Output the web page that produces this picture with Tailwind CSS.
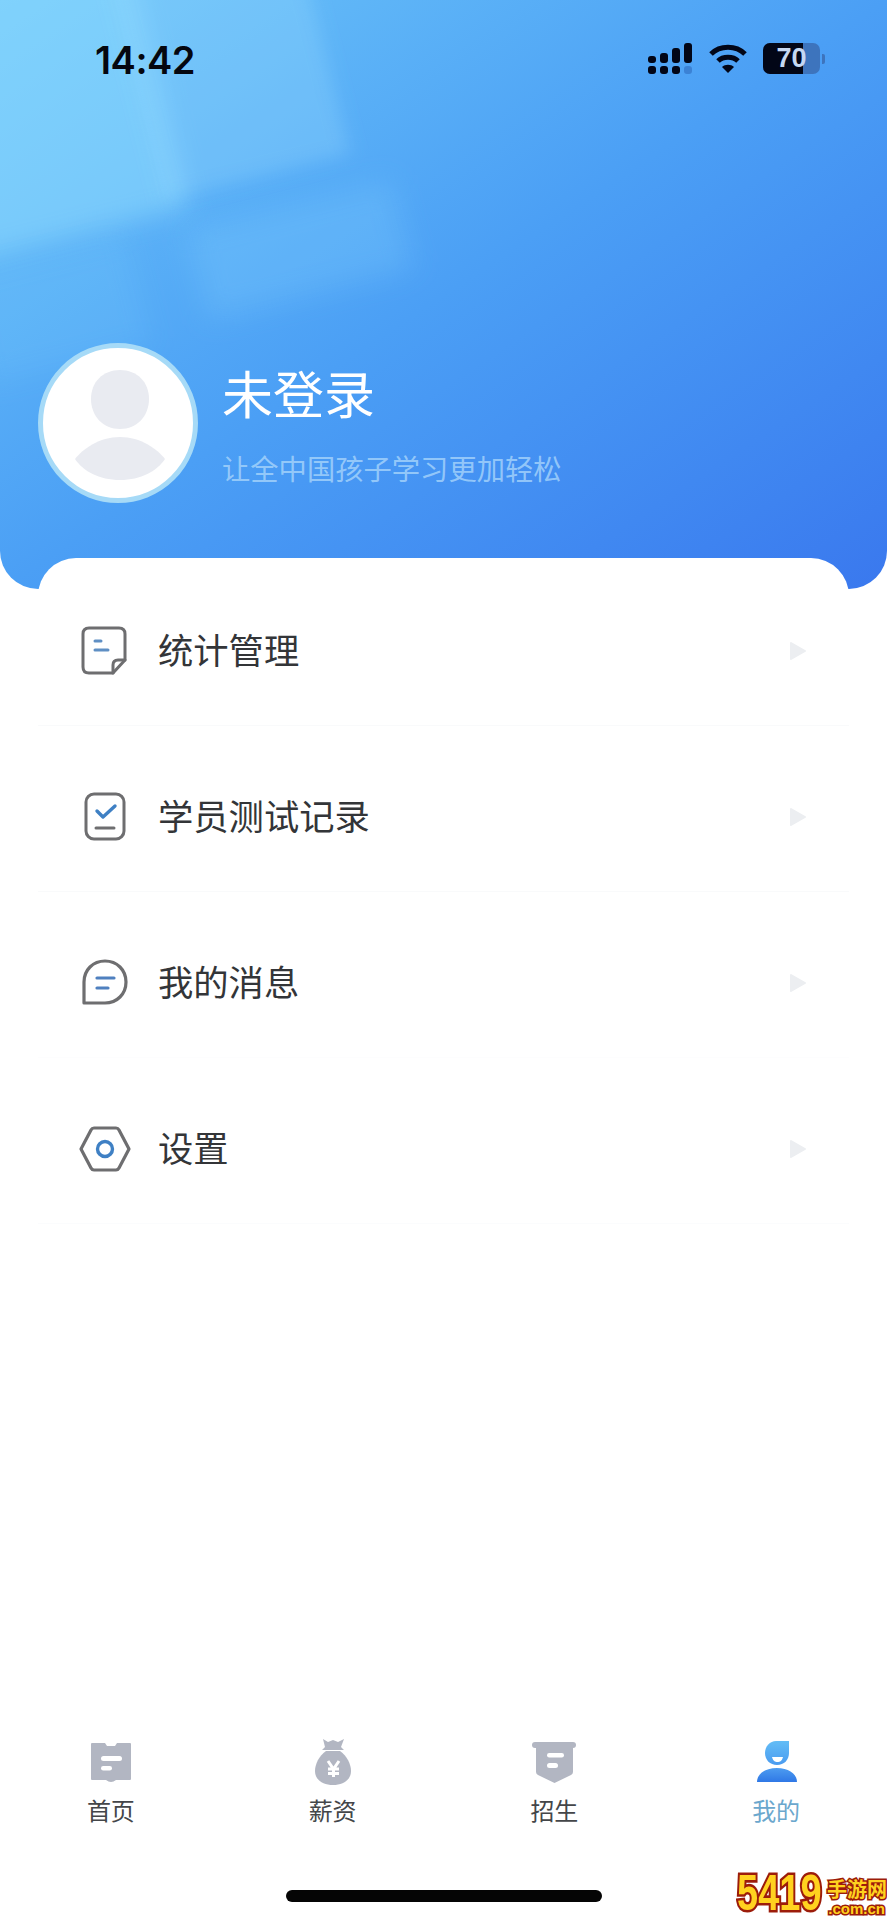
<!DOCTYPE html>
<html lang="zh">
<head>
<meta charset="utf-8">
<script src="https://cdn.jsdelivr.net/npm/@tailwindcss/browser@4"></script>
<title>我的</title>
</head>
<body class="bg-white">
<div class="relative w-[887px] h-[1920px] overflow-hidden bg-white flex flex-col font-['Noto_Sans_CJK_SC','Noto_Sans',sans-serif]">

  <!-- Header -->
  <header class="relative h-[589px] shrink-0 overflow-hidden rounded-b-[38px] bg-gradient-to-br from-[#6cc4f8] via-[#4b9ff5] to-[#3a78ee]">
    <!-- soft light panes -->
    <div class="absolute left-[-80px] top-[-60px] w-[235px] h-[300px] rotate-[-14deg] bg-[#93e0ff]/50 blur-[13px]"></div>
    <div class="absolute left-[135px] top-[-50px] w-[190px] h-[230px] rotate-[-14deg] bg-[#9fe0ff]/28 blur-[9px]"></div>
    <div class="absolute left-[195px] top-[205px] w-[210px] h-[90px] rotate-[-14deg] bg-[#8fdcff]/20 blur-[14px]"></div>
    <div class="absolute left-[-30px] top-[255px] w-[170px] h-[110px] rotate-[-14deg] bg-[#8fdcff]/12 blur-[14px]"></div>

    <div class="relative flex flex-col h-full">
      <!-- Status bar -->
      <div class="h-[120px] shrink-0 flex items-start justify-between pl-[95px] pr-[62px] pt-[36px]">
        <span class="font-['Inter',sans-serif] font-semibold text-[38px] leading-[48px] tracking-[-0.5px] text-[#05070f]">14:42</span>
        <div class="flex items-start gap-[16px] pt-[7px]">
          <svg width="46" height="32" viewBox="0 0 46 32" fill="#020617">
            <rect x="1" y="13" width="8" height="7" rx="3"/><rect x="1" y="23" width="8" height="8" rx="3"/>
            <rect x="13" y="10" width="8" height="10" rx="3"/><rect x="13" y="23" width="8" height="8" rx="3"/>
            <rect x="25" y="5" width="8" height="15" rx="3"/><rect x="25" y="23" width="8" height="8" rx="3"/>
            <rect x="37" y="0" width="8" height="20" rx="3"/><rect x="37" y="23" width="8" height="8" rx="3" fill="#2f6cbf" opacity=".6"/>
          </svg>
          <svg width="38" height="32" viewBox="0 0 38 32" fill="none" stroke="#020617" stroke-width="5">
            <path d="M2 11 C11 2 27 2 36 11"/>
            <path d="M9 18 C14 13 24 13 29 18"/>
            <path d="M19 30 L13 24 C16 21 22 21 25 24 Z" fill="#020617" stroke="none"/>
          </svg>
          <div class="flex items-center gap-[2px]">
            <div class="relative w-[57px] h-[31px] rounded-[7px] bg-[#3d74bd] overflow-hidden flex items-center justify-center">
              <div class="absolute inset-y-0 left-0 w-[40px] bg-[#020617]"></div>
              <span class="relative font-['Liberation_Sans',sans-serif] font-bold text-[27px] leading-none text-[#c5d8f2]">70</span>
            </div>
            <div class="w-[3px] h-[10px] rounded-r-[2px] bg-[#3d74bd]"></div>
          </div>
        </div>
      </div>

      <!-- Profile -->
      <div class="flex items-center pl-[38px] pt-[223px]">
        <div class="w-[160px] h-[160px] shrink-0 rounded-full bg-white border-[5px] border-[#a6daf7] flex items-center justify-center">
          <svg width="110" height="116" viewBox="0 0 110 116" fill="#e9ebf1" class="mt-[4px]">
            <path d="M57 3 C74 3 86 15 86 32 C86 49 74 62 57 62 C40 62 28 49 28 32 C28 15 40 3 57 3 Z"/>
            <path d="M57 70 C78 70 94 82 102 92 C94 104 78 113 57 113 C36 113 20 104 12 92 C20 82 36 70 57 70 Z"/>
          </svg>
        </div>
        <div class="ml-[24px] flex flex-col -mt-[1px]">
          <span class="text-[51px] leading-[66px] text-white">未登录</span>
          <span class="mt-[25px] text-[28.3px] leading-[36px] text-[#a8d5fb]/80">让全中国孩子学习更加轻松</span>
        </div>
      </div>
    </div>
  </header>

  <!-- Menu card -->
  <main class="relative mx-[38px] -mt-[31px] flex-1 bg-white rounded-t-[38px] pt-[2px]">
    <div class="flex items-start h-[166px] pt-[61px] pl-[37px] pr-[42px] border-b border-[#f9fafb]">
      <svg width="60" height="60" viewBox="0 0 60 60" fill="none" stroke-linecap="round" stroke-linejoin="round" class="shrink-0">
        <path d="M14 7 H44 Q50 7 50 13 V39 L38 52 H14 Q8 52 8 46 V13 Q8 7 14 7 Z" stroke="#6e6e70" stroke-width="3"/>
        <path d="M50 39 H43 Q38 39 38 44 V52" stroke="#6e6e70" stroke-width="3"/>
        <path d="M20 20 H26 M20 29 H33" stroke="#5f8fc4" stroke-width="3"/>
      </svg>
      <span class="ml-[23px] text-[35.3px] leading-[56px] text-[#333538]">统计管理</span>
      <svg width="18" height="22" viewBox="0 0 18 22" class="ml-auto mt-[19px] shrink-0"><path d="M2 3 L16 11 L2 19 Z" fill="#eceef1" stroke="#eceef1" stroke-width="2" stroke-linejoin="round"/></svg>
    </div>
    <div class="flex items-start h-[166px] pt-[61px] pl-[37px] pr-[42px] border-b border-[#f9fafb]">
      <svg width="60" height="60" viewBox="0 0 60 60" fill="none" stroke-linecap="round" stroke-linejoin="round" class="shrink-0">
        <rect x="11" y="7" width="38" height="45" rx="8" stroke="#6e6e70" stroke-width="3"/>
        <path d="M22 24 L28 30 L40 19" stroke="#3f80c4" stroke-width="3.4"/>
        <path d="M21 41 H39" stroke="#6e6e70" stroke-width="3"/>
      </svg>
      <span class="ml-[23px] text-[35.3px] leading-[56px] text-[#333538]">学员测试记录</span>
      <svg width="18" height="22" viewBox="0 0 18 22" class="ml-auto mt-[19px] shrink-0"><path d="M2 3 L16 11 L2 19 Z" fill="#eceef1" stroke="#eceef1" stroke-width="2" stroke-linejoin="round"/></svg>
    </div>
    <div class="flex items-start h-[166px] pt-[61px] pl-[37px] pr-[42px] border-b border-[#fdfdfe]">
      <svg width="60" height="60" viewBox="0 0 60 60" fill="none" stroke-linecap="round" stroke-linejoin="round" class="shrink-0">
        <path d="M9 50 V29 C9 17 18 8 30 8 C42 8 51 17 51 29 C51 41 42 50 30 50 Z" stroke="#6e6e70" stroke-width="3.2"/>
        <path d="M22 25 H39 M22 35 H33" stroke="#4f80bf" stroke-width="3.2"/>
      </svg>
      <span class="ml-[23px] text-[35.3px] leading-[56px] text-[#333538]">我的消息</span>
      <svg width="18" height="22" viewBox="0 0 18 22" class="ml-auto mt-[19px] shrink-0"><path d="M2 3 L16 11 L2 19 Z" fill="#eceef1" stroke="#eceef1" stroke-width="2" stroke-linejoin="round"/></svg>
    </div>
    <div class="flex items-start h-[166px] pt-[61px] pl-[37px] pr-[42px] border-b border-[#fbfcfd]">
      <svg width="60" height="60" viewBox="0 0 60 60" fill="none" stroke-linecap="round" stroke-linejoin="round" class="shrink-0">
        <path d="M6 30 L16 11 Q17 9 19 9 H41 Q43 9 44 11 L54 30 L44 49 Q43 51 41 51 H19 Q17 51 16 49 Z" stroke="#6e6e70" stroke-width="3.2"/>
        <circle cx="30" cy="30" r="7.5" stroke="#3f80c4" stroke-width="3.4"/>
      </svg>
      <span class="ml-[23px] text-[35.3px] leading-[56px] text-[#333538]">设置</span>
      <svg width="18" height="22" viewBox="0 0 18 22" class="ml-auto mt-[19px] shrink-0"><path d="M2 3 L16 11 L2 19 Z" fill="#eceef1" stroke="#eceef1" stroke-width="2" stroke-linejoin="round"/></svg>
    </div>
  </main>

  <!-- Tab bar -->
  <nav class="h-[184px] shrink-0 grid grid-cols-4 pt-[2px]">
    <div class="flex flex-col items-center">
      <svg width="50" height="50" viewBox="0 0 50 50" fill="#b2b6c2">
        <path d="M6 5 H19 L21 8 H29 L31 5 H44 Q45 5 45 6 V41 Q45 42 44 42 H30 Q25 46 20 42 H6 Q5 42 5 41 V6 Q5 5 6 5 Z"/>
        <rect x="15" y="18" width="21" height="5" rx="2.5" fill="#fff"/><rect x="15" y="28" width="11" height="4.5" rx="2.2" fill="#fff"/>
      </svg>
      <span class="mt-[5px] text-[24px] leading-[34px] text-[#444649]">首页</span>
    </div>
    <div class="flex flex-col items-center">
      <svg width="50" height="50" viewBox="0 0 50 50" fill="#b2b6c2">
        <path d="M15 1 L20 4 L25 2 L30 4 L36 1 L33 9 L36 12 H14 L17 9 Z"/>
        <path d="M18 13 H32 C39 18 43 26 43 33 C43 42 35 47 25 47 C15 47 7 42 7 33 C7 26 11 18 18 13 Z"/>
        <path d="M20 23 L25.5 31 L31 23 M25.5 31 V39 M20 31 H31 M20 35.5 H31" fill="none" stroke="#fff" stroke-width="3"/>
      </svg>
      <span class="mt-[5px] text-[24px] leading-[34px] text-[#444649]">薪资</span>
    </div>
    <div class="flex flex-col items-center">
      <svg width="50" height="50" viewBox="0 0 50 50" fill="#b2b6c2">
        <rect x="3" y="4" width="44" height="6" rx="3"/>
        <path d="M7 10 H44 V34 Q44 36 42 37 L25.5 45 L9 37 Q7 36 7 34 Z"/>
        <rect x="18" y="15" width="17" height="4.5" rx="2.2" fill="#fff"/><rect x="18" y="25" width="11" height="5" rx="2.5" fill="#fff"/>
      </svg>
      <span class="mt-[5px] text-[24px] leading-[34px] text-[#444649]">招生</span>
    </div>
    <div class="flex flex-col items-center">
      <svg width="50" height="50" viewBox="0 0 50 50">
        <defs>
          <linearGradient id="me1" x1="0" y1="0" x2="0" y2="1"><stop offset="0" stop-color="#63bdf6"/><stop offset="1" stop-color="#4a9bf0"/></linearGradient>
          <linearGradient id="me2" x1="0" y1="0" x2="0" y2="1"><stop offset="0" stop-color="#4d9cf0"/><stop offset="1" stop-color="#2f78e6"/></linearGradient>
        </defs>
        <path d="M25 3 H38 V15 C38 22 33 27 26 27 C19 27 14 22 14 15 C14 8 19 3 25 3 Z" fill="url(#me1)"/>
        <path d="M21 19 H32 C31 23 29 24 26.5 24 C24 24 22 23 21 19 Z" fill="#fff"/>
        <path d="M6 44 C6 36 14 30 26 30 C38 30 46 36 46 44 Z" fill="url(#me2)"/>
      </svg>
      <span class="mt-[5px] text-[24px] leading-[34px] text-[#6ba7cd]">我的</span>
    </div>
  </nav>

  <!-- Home indicator -->
  <div class="absolute left-[286px] top-[1890px] w-[316px] h-[12px] rounded-full bg-[#050505]"></div>

  <!-- Watermark -->
  <div class="absolute right-0 bottom-[2px] w-[150px] h-[50px] flex items-end justify-between font-['Liberation_Sans',sans-serif] font-bold text-[#ffd21f]">
    <span class="text-[38px] leading-[38px] tracking-[0px] origin-bottom-left scale-y-[1.3] [-webkit-text-stroke:4px_#9c1c0a] [paint-order:stroke_fill]">5419</span>
    <div class="flex flex-col items-end">
      <span class="text-[20px] leading-[22px] whitespace-nowrap [-webkit-text-stroke:3px_#9c1c0a] [paint-order:stroke_fill] font-['Noto_Sans_CJK_SC',sans-serif]">手游网</span>
      <span class="text-[15px] leading-[18px] pr-[2px] whitespace-nowrap [-webkit-text-stroke:3px_#9c1c0a] [paint-order:stroke_fill]">.com.cn</span>
    </div>
  </div>
</div>
</body>
</html>
